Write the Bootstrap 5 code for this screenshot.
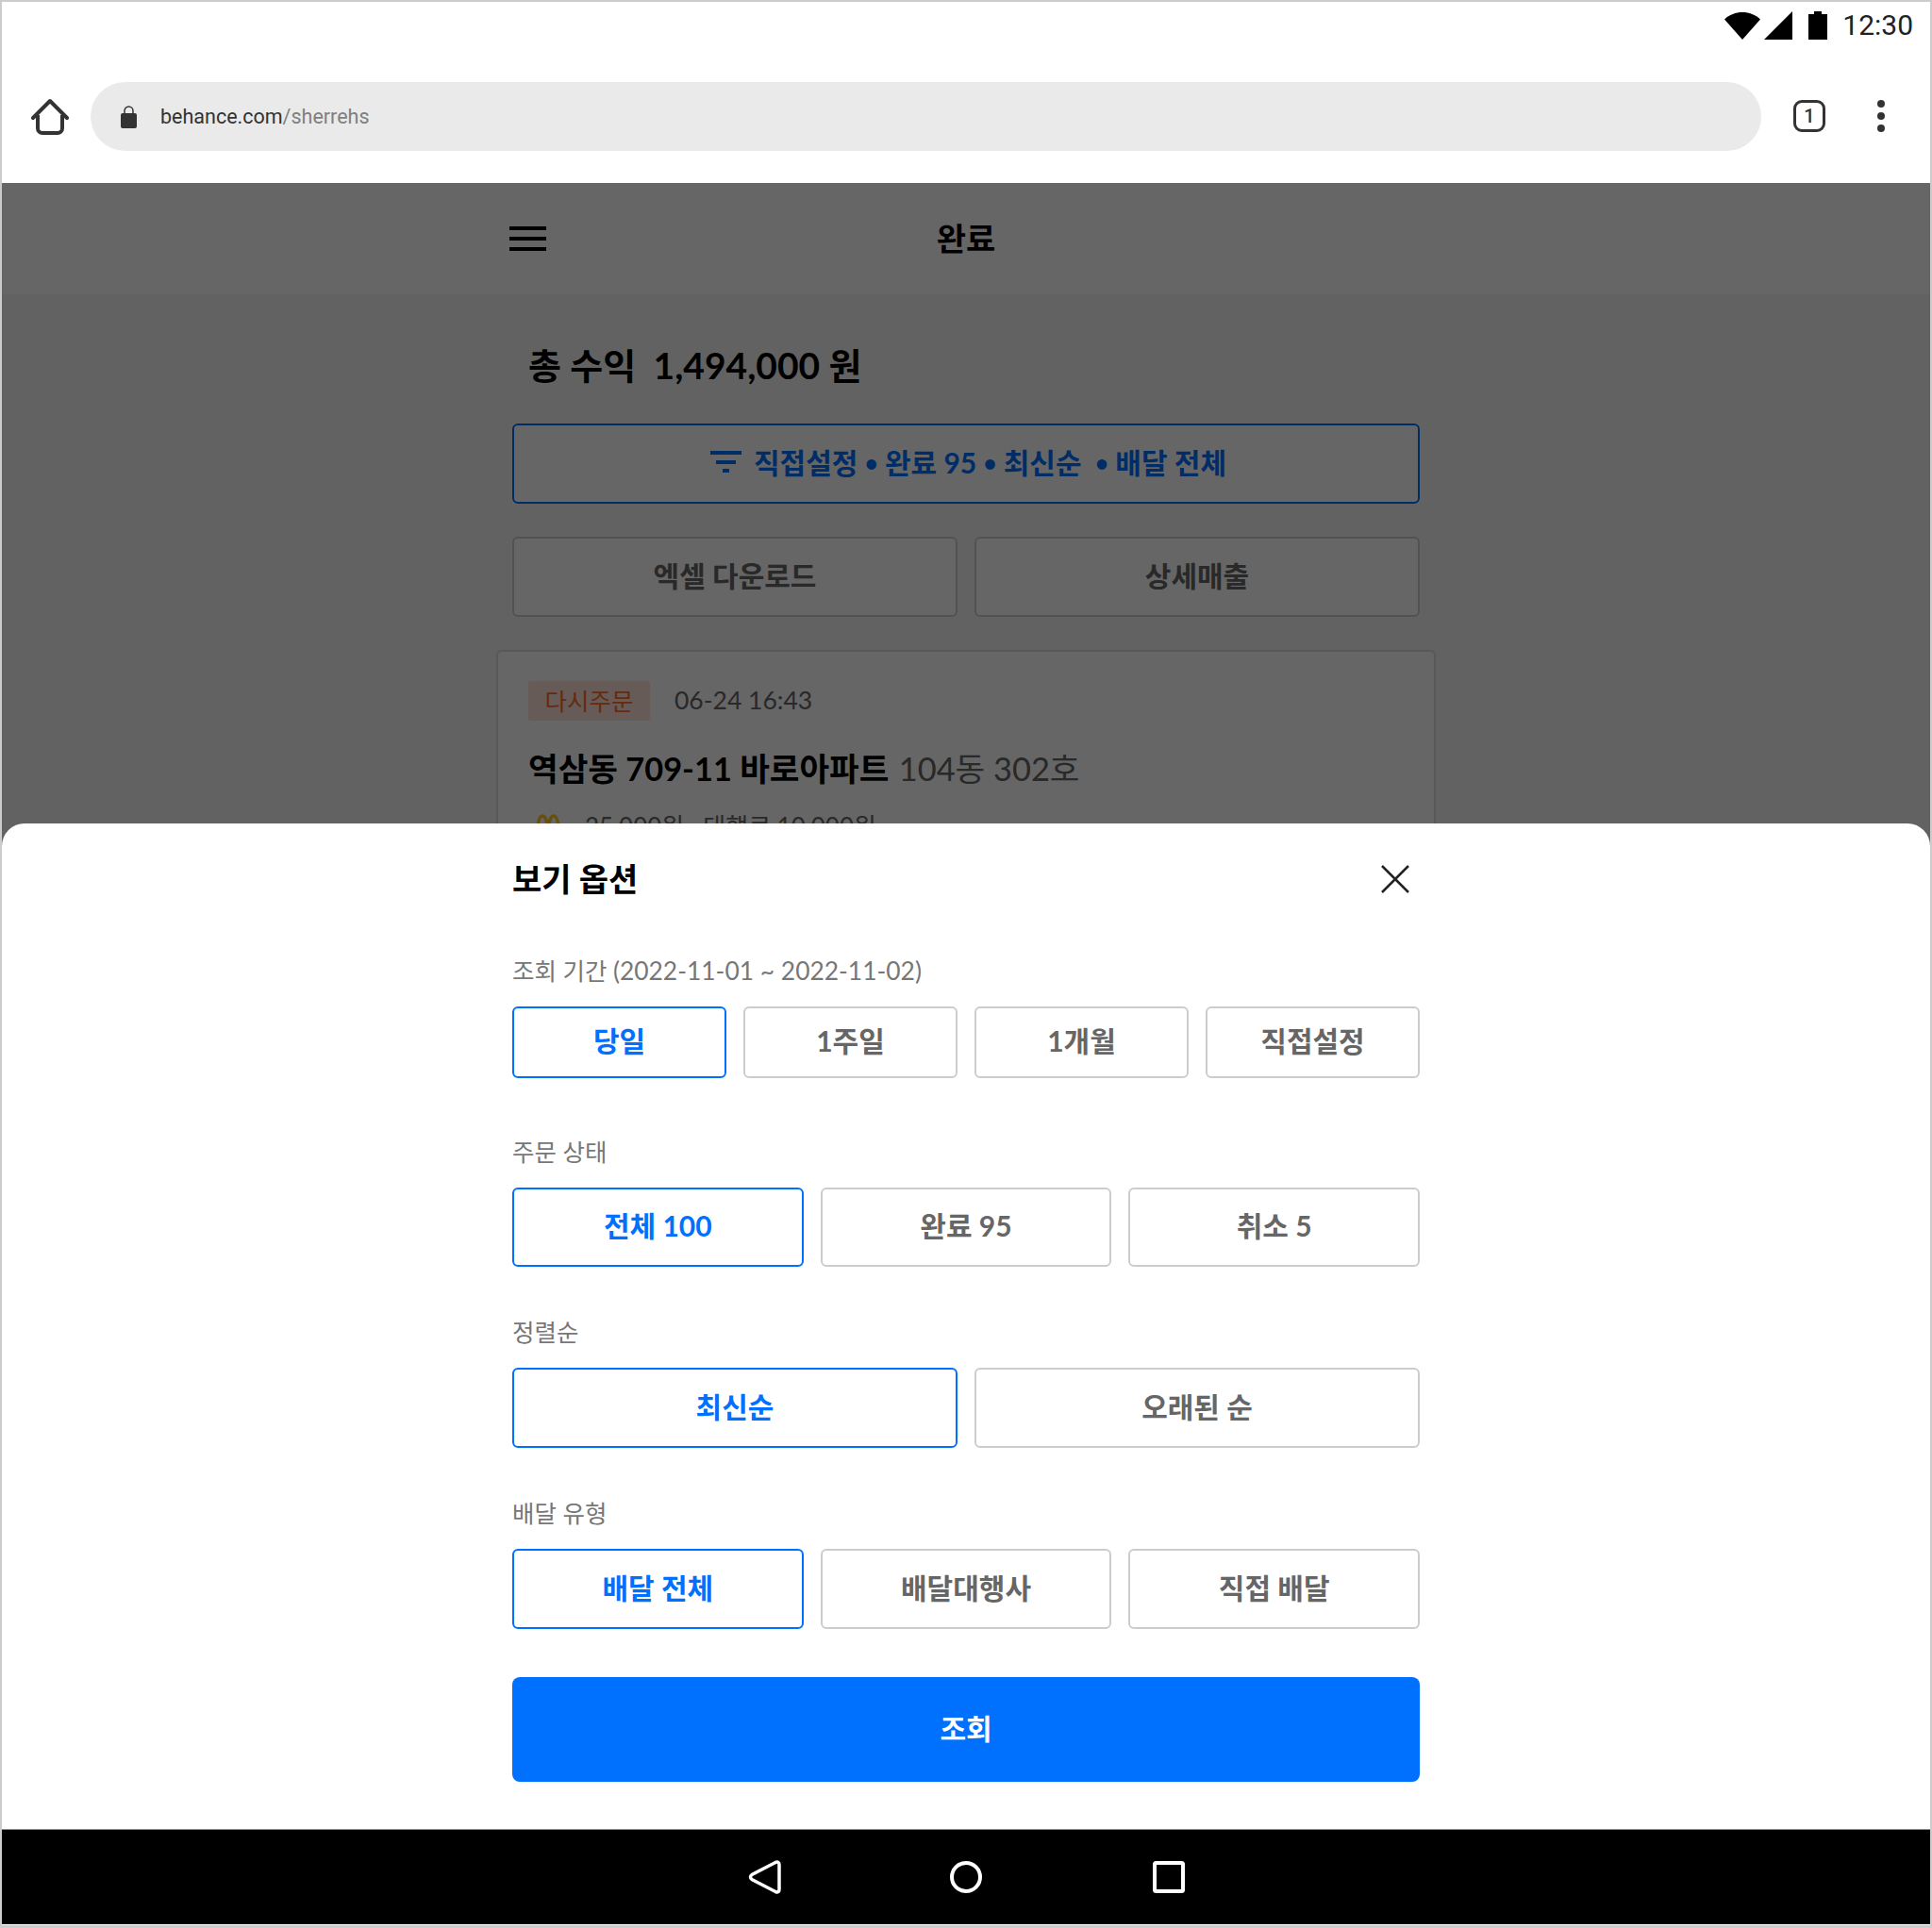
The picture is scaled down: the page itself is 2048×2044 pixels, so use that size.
<!DOCTYPE html>
<html lang="ko">
<head>
  <meta charset="UTF-8" />
  <meta name="viewport" content="width=device-width, initial-scale=1.0" />
  <title>보기 옵션</title>
  <link href="https://cdn.jsdelivr.net/npm/bootstrap@5.3.3/dist/css/bootstrap.min.css" rel="stylesheet">
  <style>
    html, body { margin: 0; background: #fff; }
    body { font-family: Lato, "Noto Sans CJK KR", sans-serif; color: #000; }

    .device {
      width: 2048px;
      height: 2044px;
      border: 2px solid #ccc;
      border-width: 2px 2px 3px 2px;
    }

    /* android status + browser bar */
    .status-bar { height: 50px; padding-right: 18px; font-family: Roboto, sans-serif; }
    .status-time { font-size: 30px; line-height: 1; color: #222; margin-left: 16px; }
    .battery-ico { margin-left: 17px; }
    .url-row { height: 142px; padding: 36px 0 36px 31px; }
    .url-pill {
      width: 1771px;
      height: 73px;
      margin-left: 23px;
      padding-left: 32px;
      border-radius: 37px;
      background: #eaeaea;
      font-family: Roboto, sans-serif;
      font-size: 21.5px;
    }
    .url-host { color: #333; margin-left: 25px; padding-top: 2px; }
    .url-path { color: #808080; }
    .tab-count {
      width: 34px;
      height: 34px;
      margin-left: 34px;
      border: 3px solid #333;
      border-radius: 9px;
      font: 500 20px/1 Roboto, sans-serif;
      color: #333;
    }
    .menu-dots { margin-left: 54px; }

    /* page behind the sheet */
    .viewport { height: 1745px; overflow: hidden; }
    .page-head { height: 118px; background: #fff; }
    .page-head-inner { width: 962px; }
    .burger { margin-left: -3px; }
    .page-title { font-size: 34px; font-weight: 700; line-height: 50px; }
    .page-body { background: #f5f5f5; height: 1627px; }
    .page-col { width: 962px; }
    .total-line { font-size: 38px; font-weight: 700; line-height: 50px; padding: 50px 0 37px 17px; margin: 0; }
    .total-num { font-size: 39px; }
    .opt-btn {
      height: 85px;
      padding: 0 0 4px;
      font-size: 30px;
      font-weight: 700;
      color: #666;
      background: #fff;
      border: 2px solid #ccc;
      border-radius: 6px;
      line-height: 1;
    }
    .opt-btn.on { color: #0070ff; border-color: #0070ff; }
    .opt-btn.short { height: 76px; }
    .opt-btn.mid { height: 84px; }
    .filter-btn { margin-bottom: 35px; padding-left: 5px; }
    .filter-ico { margin-right: 13px; }
    .sep-dot { font-size: 24px; vertical-align: 2px; }
    .order-card {
      width: 996px;
      margin: 0 -17px;
      height: 300px;
      padding: 31px 32px;
      background: #fff;
      border: 2px solid #ddd;
      border-radius: 6px;
    }
    .tag-reorder {
      width: 129px;
      height: 42px;
      background: #ffe3d6;
      color: #ff6a2a;
      font-size: 25.5px;
      border-radius: 3px;
    }
    .order-date { font-size: 26.5px; color: #666; margin-left: 26px; }
    .order-addr { font-size: 34.4px; font-weight: 700; line-height: 50px; margin-top: 26px; }
    .order-unit { font-weight: 400; color: #666; margin-left: 2px; }
    .order-fee { font-size: 26px; line-height: 40px; color: #666; margin-top: 16px; }
    .arches-ico { margin: 7px 25px 0 7px; }

    .backdrop { inset: 0; background: rgba(0, 0, 0, .6); }

    /* bottom sheet */
    .sheet {
      left: 0;
      right: 0;
      bottom: 0;
      height: 1066px;
      background: #fff;
      border-radius: 24px 24px 0 0;
      padding: 34px 0 52px;
    }
    .sheet-col { width: 962px; }
    .sheet-top { margin-bottom: 54px; }
    .sheet-title { font-size: 34px; font-weight: 700; line-height: 50px; margin: 0; }
    .close-ico { margin-right: 11px; }
    .opt-label { font-size: 25.5px; line-height: 36px; color: #777; margin-bottom: 20px; }
    .opt-label-num { font-size: 26.4px; }
    .opt-row { gap: 18px; margin-bottom: 51px; }
    .opt-row.first { margin-bottom: 60px; }
    .page-row { margin-bottom: 35px; }
    .opt-row .opt-btn { flex: 1 1 0; min-width: 0; }
    .submit-btn {
      height: 111px;
      padding: 0 0 2px;
      font-size: 30px;
      font-weight: 700;
      background: #0070ff;
      border: 0;
      border-radius: 8px;
      color: #fff;
    }

    .nav-bar { height: 101px; background: #000; border-top: 1px solid #888; }
    .nav-slot { width: 214px; }
    .nav-shift { margin-left: 2px; }
  </style>
</head>
<body>
  <div class="device d-flex flex-column">
    <div class="status-bar d-flex justify-content-end align-items-center">
      <svg width="38" height="30" viewBox="0 0 38 30"><path d="M0 8.500C5 3.500 12 1 19 1s14 2.500 19 7.500L19 30z" fill="#000"/></svg>
      <svg class="ms-1" width="30" height="30" viewBox="0 0 30 30"><path d="M30 0v30H0z" fill="#000"/></svg>
      <svg class="battery-ico" width="20" height="30" viewBox="0 0 20 30"><path d="M6 0h8v3h6v27H0V3h6z" fill="#000"/></svg>
      <span class="status-time">12:30</span>
    </div>
    <div class="url-row d-flex align-items-center bg-white">
      <svg width="40" height="40" viewBox="0 0 40 40" fill="none" stroke="#333" stroke-width="4"><path d="M7 19v14a5 5 0 0 0 5 5h16a5 5 0 0 0 5-5V19"/><path d="M2 22 20 4l18 18" stroke-linecap="round" stroke-linejoin="round"/></svg>
      <div class="url-pill d-flex align-items-center">
        <svg width="17" height="25" viewBox="0 0 17 25"><path d="M4 10V6.500a4.500 4.500 0 0 1 9 0V10" fill="none" stroke="#333" stroke-width="1.500"/><rect y="9" width="17" height="16" rx="2" fill="#333"/></svg>
        <span class="url-host">behance.com<span class="url-path">/sherrehs</span></span>
      </div>
      <div class="tab-count d-flex align-items-center justify-content-center">1</div>
      <svg class="menu-dots" width="10" height="36" viewBox="0 0 10 36" fill="#333"><circle cx="5" cy="5" r="4"/><circle cx="5" cy="18" r="4"/><circle cx="5" cy="31" r="4"/></svg>
    </div>

    <div class="viewport position-relative">
      <div class="page-head d-flex justify-content-center">
        <div class="page-head-inner position-relative d-flex align-items-center justify-content-center">
          <svg class="burger position-absolute top-50 start-0 translate-middle-y" width="39" height="26" viewBox="0 0 39 26" fill="#000"><rect width="39" height="4"/><rect y="11" width="39" height="4"/><rect y="22" width="39" height="4"/></svg>
          <span class="page-title">완료</span>
        </div>
      </div>
      <div class="page-body d-flex justify-content-center">
        <div class="page-col">
          <p class="total-line">총 수익&nbsp; <span class="total-num">1,494,000</span> 원</p>
          <button type="button" class="btn opt-btn on filter-btn w-100 d-flex align-items-center justify-content-center">
            <svg class="filter-ico" width="33" height="23" viewBox="0 0 33 23" fill="#0070ff"><rect width="33" height="4"/><rect x="6" y="10" width="21" height="4"/><rect x="13" y="19" width="7" height="4"/></svg>
            <span>직접설정 <span class="sep-dot">•</span> 완료 95 <span class="sep-dot">•</span> 최신순 &nbsp;<span class="sep-dot">•</span> 배달 전체</span>
          </button>
          <div class="opt-row page-row d-flex">
            <button type="button" class="btn opt-btn">엑셀 다운로드</button>
            <button type="button" class="btn opt-btn">상세매출</button>
          </div>
          <div class="order-card">
            <div class="d-flex align-items-center">
              <span class="tag-reorder d-flex align-items-center justify-content-center">다시주문</span>
              <span class="order-date">06-24 16:43</span>
            </div>
            <div class="order-addr">역삼동 709-11 바로아파트 <span class="order-unit">104동 302호</span></div>
            <div class="order-fee d-flex align-items-start">
              <svg class="arches-ico" width="28" height="34" viewBox="0 0 28 34" fill="none" stroke="#ffc72c" stroke-width="3.500"><path d="M2 34C2 12 4 2 8 2s6 10 6 22c0-12 2-22 6-22s6 10 6 32"/></svg>
              <span>25,000원 · 대행료 10,000원</span>
            </div>
          </div>
        </div>
      </div>

      <div class="backdrop position-absolute"></div>

      <div class="sheet position-absolute d-flex justify-content-center">
        <div class="sheet-col">
          <div class="sheet-top d-flex justify-content-between align-items-center">
            <h2 class="sheet-title">보기 옵션</h2>
            <svg class="close-ico" width="30" height="30" viewBox="0 0 30 30" stroke="#222" stroke-width="2.500"><path d="M1 1l28 28M29 1 1 29"/></svg>
          </div>

          <div class="opt-label">조회 기간 <span class="opt-label-num">(2022-11-01 ~ 2022-11-02)</span></div>
          <div class="opt-row first d-flex">
            <button type="button" class="btn opt-btn short on">당일</button>
            <button type="button" class="btn opt-btn short">1주일</button>
            <button type="button" class="btn opt-btn short">1개월</button>
            <button type="button" class="btn opt-btn short">직접설정</button>
          </div>

          <div class="opt-label">주문 상태</div>
          <div class="opt-row d-flex">
            <button type="button" class="btn opt-btn mid on">전체 100</button>
            <button type="button" class="btn opt-btn mid">완료 95</button>
            <button type="button" class="btn opt-btn mid">취소 5</button>
          </div>

          <div class="opt-label">정렬순</div>
          <div class="opt-row d-flex">
            <button type="button" class="btn opt-btn on">최신순</button>
            <button type="button" class="btn opt-btn">오래된 순</button>
          </div>

          <div class="opt-label">배달 유형</div>
          <div class="opt-row d-flex">
            <button type="button" class="btn opt-btn on">배달 전체</button>
            <button type="button" class="btn opt-btn">배달대행사</button>
            <button type="button" class="btn opt-btn">직접 배달</button>
          </div>

          <button type="button" class="btn submit-btn w-100">조회</button>
        </div>
      </div>
    </div>

    <div class="nav-bar d-flex justify-content-center align-items-center">
      <div class="nav-slot d-flex justify-content-center"><svg class="nav-shift" width="36" height="38" viewBox="0 0 36 38" fill="none" stroke="#fff" stroke-width="3.500"><path d="M29 3.500 4 16.500q-3 2.500 0 5L29 34.500q4 1.500 4-2.500V6q0-4-4-2.500z"/></svg></div>
      <div class="nav-slot d-flex justify-content-center"><svg width="34" height="34" viewBox="0 0 34 34" fill="none" stroke="#fff" stroke-width="4"><circle cx="17" cy="17" r="15"/></svg></div>
      <div class="nav-slot d-flex justify-content-center"><svg class="nav-shift" width="34" height="34" viewBox="0 0 34 34" fill="none" stroke="#fff" stroke-width="4"><rect x="2" y="2" width="30" height="30" rx="1.500"/></svg></div>
    </div>
  </div>
  <script src="https://cdn.jsdelivr.net/npm/bootstrap@5.3.3/dist/js/bootstrap.bundle.min.js"></script>
</body>
</html>
